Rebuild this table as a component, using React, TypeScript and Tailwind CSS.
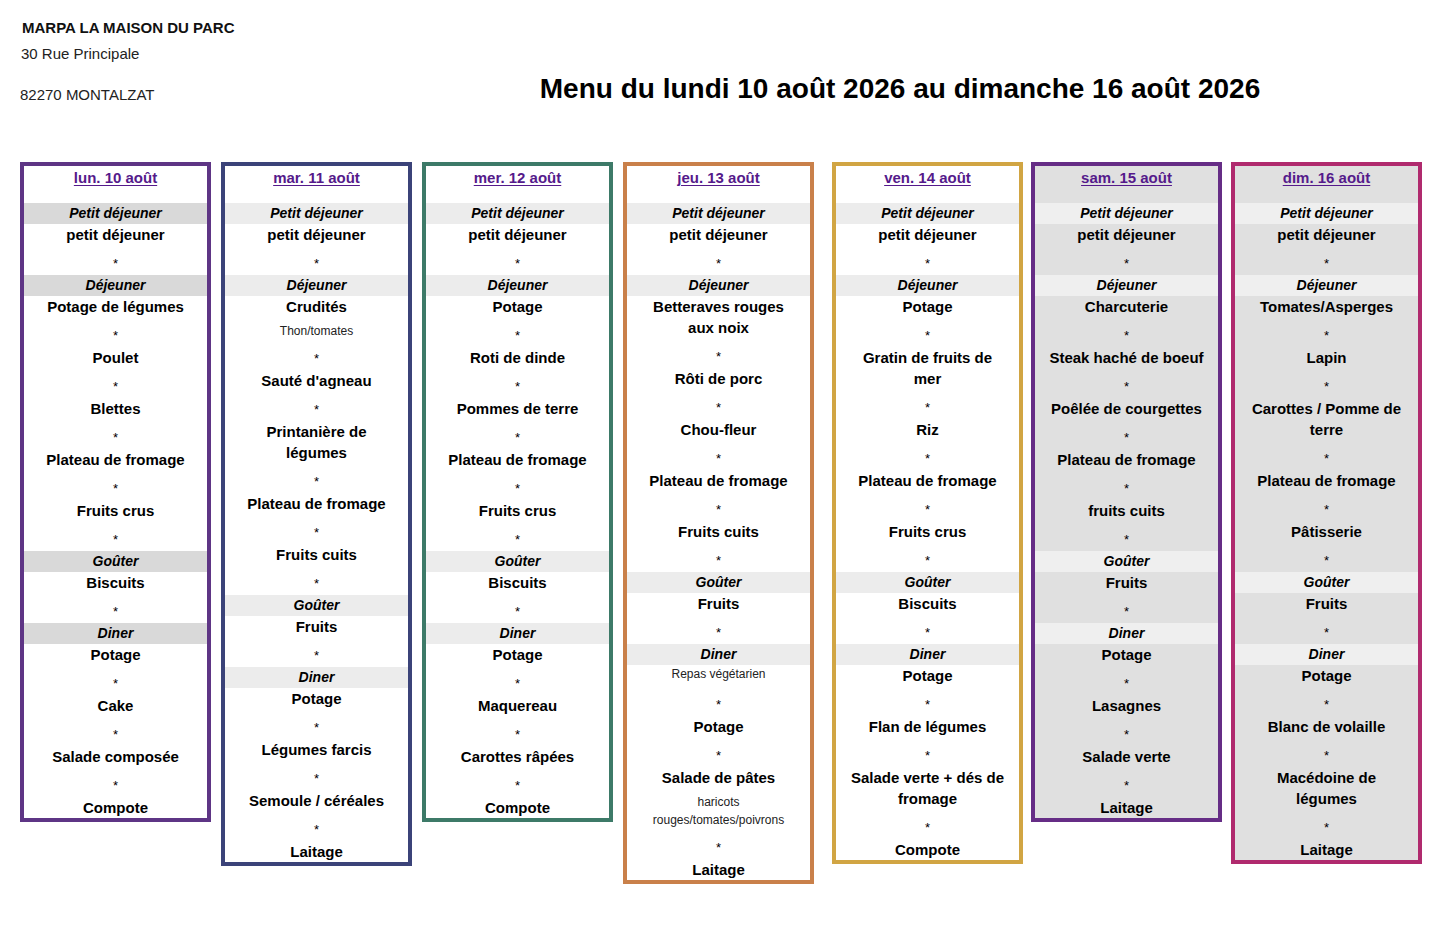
import React from "react";

type Entry =
  | { kind: "band"; label: string }
  | { kind: "dish"; text: string }
  | { kind: "note"; text: string; tight?: boolean }
  | { kind: "star" };

type Day = {
  date: string;
  border: string;
  body: string;
  band: string;
  spacing: string;
  meals: [string, string[][]][];
};

// a meal is a band then dishes; a dish is [title, ...notes]
const days: Day[] = [
  {
    date: "lun. 10 août",
    border: "border-[#5e3585]",
    body: "bg-white",
    band: "bg-[#d9d9d9]",
    spacing: "",
    meals: [
      ["Petit déjeuner", [["petit déjeuner"]]],
      [
        "Déjeuner",
        [["Potage de légumes"], ["Poulet"], ["Blettes"], ["Plateau de fromage"], ["Fruits crus"]],
      ],
      ["Goûter", [["Biscuits"]]],
      ["Diner", [["Potage"], ["Cake"], ["Salade composée"], ["Compote"]]],
    ],
  },
  {
    date: "mar. 11 août",
    border: "border-[#3b4379]",
    body: "bg-white",
    band: "bg-[#ececec]",
    spacing: "ml-[10px]",
    meals: [
      ["Petit déjeuner", [["petit déjeuner"]]],
      [
        "Déjeuner",
        [
          ["Crudités", "Thon/tomates"],
          ["Sauté d'agneau"],
          ["Printanière de légumes"],
          ["Plateau de fromage"],
          ["Fruits cuits"],
        ],
      ],
      ["Goûter", [["Fruits"]]],
      ["Diner", [["Potage"], ["Légumes farcis"], ["Semoule / céréales"], ["Laitage"]]],
    ],
  },
  {
    date: "mer. 12 août",
    border: "border-[#3d7a68]",
    body: "bg-white",
    band: "bg-[#ececec]",
    spacing: "ml-[10px]",
    meals: [
      ["Petit déjeuner", [["petit déjeuner"]]],
      [
        "Déjeuner",
        [["Potage"], ["Roti de dinde"], ["Pommes de terre"], ["Plateau de fromage"], ["Fruits crus"]],
      ],
      ["Goûter", [["Biscuits"]]],
      ["Diner", [["Potage"], ["Maquereau"], ["Carottes râpées"], ["Compote"]]],
    ],
  },
  {
    date: "jeu. 13 août",
    border: "border-[#c9804a]",
    body: "bg-white",
    band: "bg-[#ececec]",
    spacing: "ml-[10px]",
    meals: [
      ["Petit déjeuner", [["petit déjeuner"]]],
      [
        "Déjeuner",
        [
          ["Betteraves rouges aux noix"],
          ["Rôti de porc"],
          ["Chou-fleur"],
          ["Plateau de fromage"],
          ["Fruits cuits"],
        ],
      ],
      ["Goûter", [["Fruits"]]],
      [
        "Diner",
        [
          ["", "Repas végétarien"],
          ["Potage"],
          ["Salade de pâtes", "haricots rouges/tomates/poivrons"],
          ["Laitage"],
        ],
      ],
    ],
  },
  {
    date: "ven. 14 août",
    border: "border-[#d1a543]",
    body: "bg-white",
    band: "bg-[#ececec]",
    spacing: "ml-[18px]",
    meals: [
      ["Petit déjeuner", [["petit déjeuner"]]],
      [
        "Déjeuner",
        [["Potage"], ["Gratin de fruits de mer"], ["Riz"], ["Plateau de fromage"], ["Fruits crus"]],
      ],
      ["Goûter", [["Biscuits"]]],
      [
        "Diner",
        [["Potage"], ["Flan de légumes"], ["Salade verte + dés de fromage"], ["Compote"]],
      ],
    ],
  },
  {
    date: "sam. 15 août",
    border: "border-[#662d86]",
    body: "bg-[#e0e0e0]",
    band: "bg-[#efefef]",
    spacing: "ml-[8px]",
    meals: [
      ["Petit déjeuner", [["petit déjeuner"]]],
      [
        "Déjeuner",
        [
          ["Charcuterie"],
          ["Steak haché de boeuf"],
          ["Poêlée de courgettes"],
          ["Plateau de fromage"],
          ["fruits cuits"],
        ],
      ],
      ["Goûter", [["Fruits"]]],
      ["Diner", [["Potage"], ["Lasagnes"], ["Salade verte"], ["Laitage"]]],
    ],
  },
  {
    date: "dim. 16 août",
    border: "border-[#b02a6e]",
    body: "bg-[#e0e0e0]",
    band: "bg-[#efefef]",
    spacing: "ml-[9px]",
    meals: [
      ["Petit déjeuner", [["petit déjeuner"]]],
      [
        "Déjeuner",
        [
          ["Tomates/Asperges"],
          ["Lapin"],
          ["Carottes / Pomme de terre"],
          ["Plateau de fromage"],
          ["Pâtisserie"],
        ],
      ],
      ["Goûter", [["Fruits"]]],
      [
        "Diner",
        [["Potage"], ["Blanc de volaille"], ["Macédoine de légumes"], ["Laitage"]],
      ],
    ],
  },
];

function flatten(day: Day): Entry[] {
  const out: Entry[] = [];
  day.meals.forEach(([label, dishes], mi) => {
    if (mi > 0) out.push({ kind: "star" });
    out.push({ kind: "band", label });
    dishes.forEach((dish, di) => {
      if (di > 0) out.push({ kind: "star" });
      const [title, ...notes] = dish;
      if (title) out.push({ kind: "dish", text: title });
      notes.forEach((n) => out.push({ kind: "note", text: n, tight: !title }));
    });
  });
  return out;
}

function DayColumn({ day }: { day: Day }) {
  return (
    <div
      className={`w-[191px] shrink-0 border-4 ${day.border} ${day.body} ${day.spacing} text-center`}
    >
      <div className="h-[37px]">
        <span className="text-[15px] leading-[20px] font-bold text-[#551a8b] underline underline-offset-2">
          {day.date}
        </span>
      </div>
      {flatten(day).map((e, i) => {
        if (e.kind === "band")
          return (
            <div
              key={i}
              className={`${day.band} h-[21px] text-[14px] leading-[21px] font-bold italic text-black`}
            >
              {e.label}
            </div>
          );
        if (e.kind === "dish")
          return (
            <div key={i} className="text-[15px] leading-[21px] font-bold text-black px-3">
              {e.text}
            </div>
          );
        if (e.kind === "note")
          return (
            <div
              key={i}
              className={`px-4 text-[12px] leading-[18px] text-[#222] ${e.tight ? "mt-0 mb-[3px]" : "mt-[5px]"}`}
            >
              {e.text}
            </div>
          );
        return (
          <div key={i} className="h-[30px] pt-[12px] text-[13px] leading-[13px] text-black">
            *
          </div>
        );
      })}
    </div>
  );
}

export default function App() {
  return (
    <div className="min-h-screen bg-white font-['Liberation_Sans',Arial,sans-serif] text-black">
      <div className="flex pt-[18px]">
        <div className="w-[360px] shrink-0 pl-[20px]">
          <div className="pl-[2px] text-[15px] leading-[20px] font-bold text-[#111]">
            MARPA LA MAISON DU PARC
          </div>
          <div className="pl-[1px] mt-[6px] text-[15px] leading-[20px] text-[#222]">
            30 Rue Principale
          </div>
          <div className="mt-[21px] text-[15px] leading-[20px] text-[#222]">82270 MONTALZAT</div>
        </div>
        <div className="flex-1 pt-[55px] text-center">
          <h1 className="text-[28px] leading-[32px] font-bold text-black">
            Menu du lundi 10 août 2026 au dimanche 16 août 2026
          </h1>
        </div>
      </div>
      <div className="flex items-start pl-[20px] mt-[57px]">
        {days.map((d) => (
          <DayColumn key={d.date} day={d} />
        ))}
      </div>
    </div>
  );
}
